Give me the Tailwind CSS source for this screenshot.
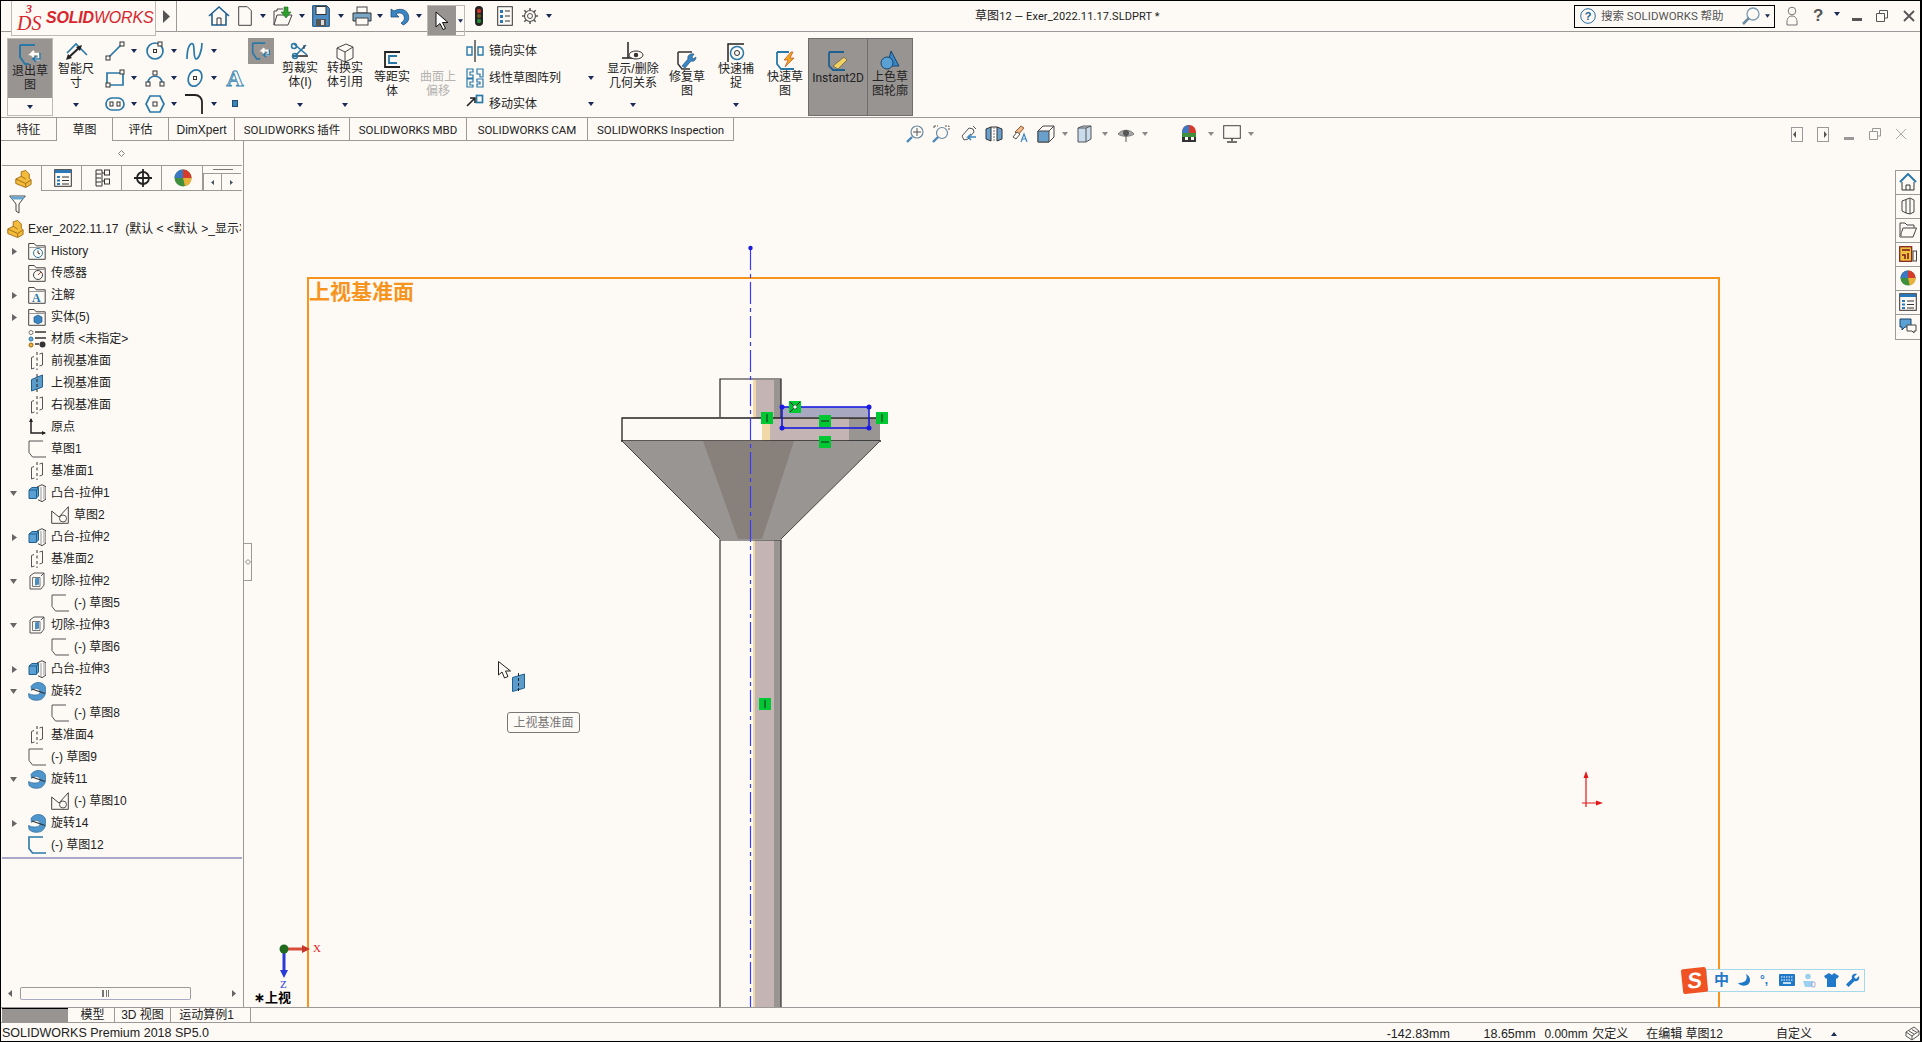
<!DOCTYPE html>
<html lang="zh">
<head>
<meta charset="utf-8">
<title>SOLIDWORKS</title>
<script src="https://cdn.jsdelivr.net/npm/@tailwindcss/browser@4"></script>
</head>
<body class="bg-[#fdfaf6]">
<svg class="hidden">
  <symbol id="drop" viewBox="0 0 6 4"><polygon points="0,0 6,0 3,4" fill="#1b2a55"/></symbol>
  <symbol id="dropg" viewBox="0 0 6 4"><polygon points="0,0 6,0 3,4" fill="#8a8a8a"/></symbol>
  <symbol id="folder" viewBox="0 0 18 18"><path d="M.7 17.3V1.5h5.5l2 2.3h9v13.5z" fill="none" stroke="#444"/><path d="M.7 5.5h16.6" stroke="#999"/></symbol>
  <symbol id="plane" viewBox="0 0 18 18"><path d="M6 4.500 3.500 5.500V17L6.500 16M11.500 2 14.500 1V13L11.500 14" fill="none" stroke="#555"/><path d="M9 0v18" stroke="#333" stroke-dasharray="3 2.500"/></symbol>
  <symbol id="planeb" viewBox="0 0 18 18"><path d="M3.500 5.500 14.500 1V13L3.500 17z" fill="#5b9ccb" stroke="#1f5f8f"/><path d="M9 0v18" stroke="#222" stroke-dasharray="3 2"/></symbol>
  <symbol id="sk" viewBox="0 0 18 18"><path d="M15 1H1v11.5L4.500 17H18" fill="none" stroke="#555"/></symbol>
  <symbol id="skb" viewBox="0 0 18 18"><path d="M15 1H1v11.500L4.500 17H18" fill="none" stroke="#2a78a8" stroke-width="1.600"/></symbol>
  <symbol id="skc" viewBox="0 0 18 18"><path d="M.7 5 8 11 17.300.7v16.600H.700z" fill="none" stroke="#444"/><circle cx="12" cy="12.500" r="3.500" fill="#fdfaf6" stroke="#555"/></symbol>
  <symbol id="ext" viewBox="0 0 18 18"><path d="M9 3 14 .7l4 2V15l-4 2.700-4-2" fill="#fdfaf6" stroke="#444"/><path d="M13 3v14M16 2v13" stroke="#999"/><path d="M1 6l3-2.500h6.500V12L8 14.500H1z" fill="#5aa0d2" stroke="#1f5f8f"/><path d="M1 6h7.500v8.500M8.500 6l2-2.500" fill="none" stroke="#1f5f8f"/></symbol>
  <symbol id="cut" viewBox="0 0 18 18"><path d="M2 4 6 1h10v12l-3 4H2z" fill="#fdfaf6" stroke="#555"/><path d="M4.500 5.500h7.500v9H4.500z" fill="#fdfaf6" stroke="#777"/><path d="M7 6.500l4-1v7l-4 1z" fill="#4a8fc0"/><path d="M13 4 16 1" stroke="#555"/></symbol>
  <symbol id="rev" viewBox="0 0 18 19"><path d="M3 5C6 0 14-.5 17 4.500c2 5 .5 11-4 13.500-4 1.500-9 1-12-2L.5 12c4 2 9 2 11 0 1.500-2 0-4.500-2.500-5-2-.5-4 .5-5.500 2z" fill="#4f96cc" stroke="#2a6a9c" stroke-width=".7"/><path d="M4 7.500l13 4.500" stroke="#333" stroke-width="1.300"/></symbol>
  <symbol id="part" viewBox="0 0 20 20"><path d="M2 10 8 7V2l5-1.500 4 4V9l2 2v5l-6 3.500L2 15z" fill="#f2bb3c" stroke="#a06a10" stroke-linejoin="round"/><path d="M2 10l11 5 6-4M13 15v4M8 7l5 3" fill="none" stroke="#a06a10"/></symbol>
  <symbol id="pane" viewBox="0 0 18 18"><rect x=".700" y=".700" width="16.600" height="16.600" fill="#fdfaf6" stroke="#333"/><rect x="1" y="1" width="16" height="3" fill="#2a78b8"/><path d="M3 7h3v2H3zM3 10.500h3v2H3zM3 14h3v2H3z" fill="#2a78b8"/><path d="M8 8h7M8 11.500h7M8 15h7" stroke="#333"/></symbol>
  <symbol id="appear" viewBox="0 0 18 18"><circle cx="9" cy="9" r="8.500" fill="#3f8f3c"/><path d="M9 .5A8.500 8.500 0 0 1 17.500 9H9z" fill="#d63a2a"/><path d="M.5 9A8.500 8.500 0 0 1 9 .5V9z" fill="#3b77c2"/><path d="M9 9h8.500A8.500 8.500 0 0 1 11 17.300z" fill="#e9b13a"/></symbol>
</svg>

<div class="w-[1922px] h-[1042px] overflow-hidden flex flex-col border-t border-b border-l border-r-2 border-black bg-[#fdfaf6] text-[12px] leading-[14px] text-[#222] [font-family:'Liberation_Sans','Noto_Sans_CJK_SC',sans-serif]">

  <!-- title bar -->
  <div class="h-[31px] shrink-0 flex items-center border-b border-[#9c9a98]">
    <div class="ml-[10px] w-[145px] h-[35px] self-start shrink-0 z-10 flex items-center border-x border-b border-[#bdbab6] bg-[#fdfaf6]">
      <svg class="ml-[4px] w-[28px] h-[30px]" viewBox="0 0 28 30"><text x="10" y="10" font-size="12" font-style="italic" font-weight="700" fill="#d8262c" font-family="Liberation Serif">3</text><text x="1" y="27" font-size="20" font-style="italic" fill="#d8262c" font-family="Liberation Serif">DS</text></svg>
      <span class="ml-[2px] text-[#d8262c] italic text-[16px] leading-[18px] tracking-[-0.2px] whitespace-nowrap"><b>SOLID</b>WORKS</span>
    </div>
    <svg class="ml-[7px] w-[7px] h-[13px]" viewBox="0 0 7 13"><polygon points="0,0 7,6.500 0,13" fill="#555"/></svg>
    <div class="ml-[6px] w-px h-full bg-[#9c9a98]"></div>
    <svg class="ml-[31px] w-[22px] h-[22px]" viewBox="0 0 22 22"><path d="M1 11 11 2l10 9M4 9v11h14V9" fill="#fdfaf6" stroke="#1e5f92" stroke-width="1.600"/><path d="M9 20v-7h4v7" fill="none" stroke="#333"/></svg>
    <svg class="ml-[8px] w-[14px] h-[20px]" viewBox="0 0 14 20"><path d="M.7.7h8.600l4 4v14.600H.7z" fill="#fdfaf6" stroke="#444"/></svg>
    <svg class="ml-[8px] w-[6px] h-[4px]"><use href="#drop"/></svg>
    <svg class="ml-[7px] w-[20px] h-[20px]" viewBox="0 0 20 20"><path d="M1 19V5h3V3h6M1 19l3-10h15l-4 10z" fill="#fdfaf6" stroke="#444"/><path d="M11 1v5H8l5 6 5-6h-3V1z" fill="#2f9e2f" stroke="#1d6d1d" stroke-width=".6"/></svg>
    <svg class="ml-[6px] w-[6px] h-[4px]"><use href="#drop"/></svg>
    <svg class="ml-[7px] w-[18px] h-[22px]" viewBox="0 0 18 22"><path d="M.7.7h14l2.600 2.600v18H.7z" fill="#4d8cc0" stroke="#16456e"/><rect x="4" y="1.500" width="10" height="8" fill="#fdfaf6" stroke="#333"/><rect x="4" y="14" width="10" height="7" fill="#555"/><rect x="9" y="15" width="3" height="5" fill="#ddd"/></svg>
    <svg class="ml-[8px] w-[6px] h-[4px]"><use href="#drop"/></svg>
    <svg class="ml-[8px] w-[20px] h-[20px]" viewBox="0 0 20 20"><rect x="5" y="1" width="10" height="6" fill="#fdfaf6" stroke="#444"/><path d="M1 7h18v8H1z" fill="#7aa7c8" stroke="#333"/><rect x="4" y="12" width="12" height="7" fill="#fdfaf6" stroke="#444"/></svg>
    <svg class="ml-[5px] w-[6px] h-[4px]"><use href="#drop"/></svg>
    <svg class="ml-[7px] w-[20px] h-[20px]" viewBox="0 0 20 20"><path d="M1 3v8h8L6 8c3-2 7-1 8 2 1 3 0 5-3 7l2 2c5-2 7-6 5-11-2-5-9-6-14-3z" fill="#3a86c4" stroke="#16456e" stroke-width=".7"/></svg>
    <svg class="ml-[6px] w-[6px] h-[4px]"><use href="#drop"/></svg>
    <div class="ml-[5px] w-[38px] h-[31px] self-start mt-[4px] flex border border-[#bdbab6]">
      <div class="w-[28px] h-full bg-[#989492] flex items-center justify-center"><svg class="w-[14px] h-[20px]" viewBox="0 0 14 20"><path d="M1 1v15l4-3.500 3 6 2.500-1-3-6H13z" fill="#fff" stroke="#111"/></svg></div>
      <div class="flex-1 flex items-center justify-center"><svg class="w-[5px] h-[4px]"><use href="#drop"/></svg></div>
    </div>
    <svg class="ml-[10px] w-[8px] h-[20px]" viewBox="0 0 8 20"><rect width="8" height="20" rx="4" fill="#222"/><circle cx="4" cy="5" r="2.200" fill="#c8352a"/><circle cx="4" cy="10" r="2" fill="#6a5a20"/><circle cx="4" cy="15" r="2.200" fill="#2a8a3a"/></svg>
    <svg class="ml-[14px] w-[16px] h-[20px]" viewBox="0 0 16 20"><rect x=".7" y=".7" width="14.600" height="18.600" fill="#fdfaf6" stroke="#333"/><path d="M3 4h3v3H3zM3 9h3v3H3zM3 14h3v3H3z" fill="#2a78b8"/><path d="M8 5h5M8 10h5M8 15h5" stroke="#333"/></svg>
    <svg class="ml-[9px] w-[16px] h-[16px]" viewBox="0 0 16 16"><circle cx="8" cy="8" r="5.500" fill="none" stroke="#555" stroke-width="1.200"/><circle cx="8" cy="8" r="2.500" fill="none" stroke="#555"/><path d="M8 0v3M8 13v3M0 8h3M13 8h3M2.300 2.300l2 2M11.700 11.700l2 2M2.300 13.700l2-2M11.700 4.300l2-2" stroke="#555" stroke-width="1.500"/></svg>
    <svg class="ml-[8px] w-[6px] h-[4px]"><use href="#drop"/></svg>
    <div class="ml-[423px] mt-[1px] w-[182px] whitespace-nowrap [font-family:'Roboto','Noto_Sans_CJK_SC',sans-serif] text-[11px] tracking-[0.1px]"><span class="text-[12px]">草图</span>12 — Exer_2022.11.17.SLDPRT *</div>
    <div class="ml-auto flex items-center pr-[5px]">
      <div class="w-[201px] h-[23px] border border-black flex items-center">
        <svg class="ml-[5px] w-[16px] h-[16px]" viewBox="0 0 16 16"><circle cx="8" cy="8" r="7.300" fill="#fdfaf6" stroke="#2a6a9c"/><text x="8" y="12" font-size="11" font-weight="700" text-anchor="middle" fill="#1f5f8f" font-family="Liberation Sans">?</text></svg>
        <span class="ml-[5px] text-[#555] whitespace-nowrap [font-family:'Roboto','Noto_Sans_CJK_SC',sans-serif] text-[11.5px]">搜索 SOLIDWORKS 帮助</span>
        <svg class="ml-auto w-[18px] h-[18px]" viewBox="0 0 18 18"><circle cx="11" cy="7" r="6" fill="#fdfaf6" stroke="#7a9ab0" stroke-width="1.300"/><path d="M7 11 1 17" stroke="#6a8aa0" stroke-width="2.500"/></svg>
        <svg class="ml-[5px] mr-[4px] w-[5px] h-[4px]"><use href="#drop"/></svg>
      </div>
      <svg class="ml-[11px] w-[12px] h-[20px]" viewBox="0 0 12 20"><circle cx="6" cy="5" r="3.800" fill="none" stroke="#777"/><path d="M1 19v-3c0-4 2-6 5-6s5 2 5 6v3z" fill="none" stroke="#777"/></svg>
      <span class="ml-[15px] w-[10px] text-[17px] font-bold text-[#555] leading-[20px]">?</span>
      <svg class="ml-[11px] w-[6px] h-[4px] mb-[4px]"><use href="#drop"/></svg>
      <div class="ml-[12px] w-[10px] h-[3px] mt-[7px] bg-[#555]"></div>
      <svg class="ml-[14px] w-[12px] h-[12px]" viewBox="0 0 12 12"><path d="M3.500 3V.5h8V8H9M.5 3.500h8v8h-8z" fill="none" stroke="#555"/></svg>
      <svg class="ml-[15px] w-[12px] h-[12px]" viewBox="0 0 12 12"><path d="M1 1l10 10M11 1 1 11" stroke="#555" stroke-width="1.800"/></svg>
    </div>
  </div>

  <!-- ribbon -->
  <div class="h-[86px] shrink-0 flex border-b border-[#9c9a98] pt-[6px]">
    <div class="ml-[6px] w-[46px] h-[78px] flex flex-col border border-[#bdbab6]">
      <div class="h-[59px] bg-[#989492] flex flex-col items-center">
        <svg class="mt-[5px] w-[24px] h-[21px]" viewBox="0 0 24 21"><path d="M2 1h15M2 1v12l5 7h4" fill="none" stroke="#2a78a8" stroke-width="2"/><path d="M21 10H13l3-3M13 10l3 3M21 10v5h-6" fill="none" stroke="#fdfaf6" stroke-width="2.400"/><path d="M22 9v6h-7l3-3M15 15l3 3" fill="none" stroke="#2a78a8" stroke-width="1.500"/></svg>
        <div class="mt-[-1px] text-center">退出草<br>图</div>
      </div>
      <div class="flex-1 flex items-center justify-center"><svg class="w-[6px] h-[4px]"><use href="#drop"/></svg></div>
    </div>
    <div class="w-[46px] h-[78px] flex flex-col items-center">
      <svg class="mt-[3px] w-[28px] h-[21px]" viewBox="0 0 28 21"><path d="M5 12 14 3l11 11" fill="none" stroke="#2a78a8" stroke-width="1.600"/><path d="M6 17 18 6" stroke="#222" stroke-width="2"/><path d="M4 19l2-6 4 4zM20 4l-2 6-4-4z" fill="#222"/></svg>
      <div class="text-center">智能尺<br>寸</div>
      <svg class="mt-auto mb-[9px] w-[6px] h-[4px]"><use href="#drop"/></svg>
    </div>
    <div class="ml-[6px] w-[140px] grid grid-cols-[40px_40px_40px_20px] grid-rows-[26px_27px_25px] h-[78px]">
      <div class="flex items-center"><svg class="w-[20px] h-[20px]" viewBox="0 0 20 20"><path d="M3 17 17 3" stroke="#2a78a8" stroke-width="1.700"/><rect x="1" y="15" width="4" height="4" fill="#fdfaf6" stroke="#333"/><rect x="15" y="1" width="4" height="4" fill="#fdfaf6" stroke="#333"/></svg><svg class="ml-[6px] w-[6px] h-[4px]"><use href="#drop"/></svg></div>
      <div class="flex items-center"><svg class="w-[20px] h-[20px]" viewBox="0 0 20 20"><circle cx="10" cy="10" r="8" fill="none" stroke="#2a78a8" stroke-width="1.700"/><rect x="8.500" y="8.500" width="3" height="3" fill="#fdfaf6" stroke="#333"/><rect x="13" y="1" width="4" height="4" fill="#fdfaf6" stroke="#333"/></svg><svg class="ml-[6px] w-[6px] h-[4px]"><use href="#drop"/></svg></div>
      <div class="flex items-center"><svg class="w-[20px] h-[20px]" viewBox="0 0 20 20"><path d="M2 18C2 5 6 1 8 3c2 3 0 14 3 15 3 0 6-9 6-16" fill="none" stroke="#2a78a8" stroke-width="1.700"/></svg><svg class="ml-[6px] w-[6px] h-[4px]"><use href="#drop"/></svg></div>
      <div></div>
      <div class="flex items-center"><svg class="w-[20px] h-[20px]" viewBox="0 0 20 20"><path d="M2 5h16v12H2z" fill="none" stroke="#2a78a8" stroke-width="1.700"/><rect x="15" y="2" width="4" height="4" fill="#fdfaf6" stroke="#333"/><rect x="1" y="15" width="4" height="4" fill="#fdfaf6" stroke="#333"/></svg><svg class="ml-[6px] w-[6px] h-[4px]"><use href="#drop"/></svg></div>
      <div class="flex items-center"><svg class="w-[20px] h-[20px]" viewBox="0 0 20 20"><path d="M3 15C3 6 17 6 17 15" fill="none" stroke="#2a78a8" stroke-width="1.700"/><rect x="1" y="14" width="4" height="4" fill="#fdfaf6" stroke="#333"/><rect x="15" y="14" width="4" height="4" fill="#fdfaf6" stroke="#333"/><rect x="8" y="3" width="4" height="4" fill="#fdfaf6" stroke="#333"/></svg><svg class="ml-[6px] w-[6px] h-[4px]"><use href="#drop"/></svg></div>
      <div class="flex items-center"><svg class="w-[20px] h-[20px]" viewBox="0 0 20 20"><ellipse cx="10" cy="10" rx="6.500" ry="8.500" transform="rotate(25 10 10)" fill="none" stroke="#2a78a8" stroke-width="1.700"/><rect x="8.500" y="8.500" width="3" height="3" fill="#fdfaf6" stroke="#333"/></svg><svg class="ml-[6px] w-[6px] h-[4px]"><use href="#drop"/></svg></div>
      <div class="flex items-center justify-center"><span class="text-[24px] leading-[24px] font-bold text-[#fdfaf6] [-webkit-text-stroke:1px_#3a86b4] [font-family:'Liberation_Serif',serif]">A</span></div>
      <div class="flex items-center"><svg class="w-[20px] h-[16px]" viewBox="0 0 20 16"><rect x="1" y="2" width="18" height="12" rx="6" fill="#fdfaf6" stroke="#2a78a8" stroke-width="1.700"/><rect x="5" y="6" width="3" height="4" fill="#fdfaf6" stroke="#333"/><rect x="12" y="6" width="3" height="4" fill="#fdfaf6" stroke="#333"/></svg><svg class="ml-[6px] w-[6px] h-[4px]"><use href="#drop"/></svg></div>
      <div class="flex items-center"><svg class="w-[20px] h-[20px]" viewBox="0 0 20 20"><polygon points="5,2 15,2 19,10 15,18 5,18 1,10" fill="none" stroke="#2a78a8" stroke-width="1.700"/><rect x="8" y="8" width="4" height="4" fill="#fdfaf6" stroke="#333"/></svg><svg class="ml-[6px] w-[6px] h-[4px]"><use href="#drop"/></svg></div>
      <div class="flex items-center"><svg class="w-[20px] h-[22px]" viewBox="0 0 20 22"><path d="M0 2h10c4 0 7 3 7 7v12" fill="none" stroke="#222" stroke-width="1.800"/></svg><svg class="ml-[6px] w-[6px] h-[4px]"><use href="#drop"/></svg></div>
      <div class="flex items-center justify-center"><div class="w-[6px] h-[7px] bg-[#3a86b4] border border-[#1f4f78]"></div></div>
    </div>
    <div class="ml-[3px] w-[26px] h-[26px] bg-[#989492] flex items-center justify-center"><svg class="w-[20px] h-[20px]" viewBox="0 0 24 21"><path d="M2 1h15M2 1v12l5 7h4" fill="none" stroke="#2a78a8" stroke-width="2"/><path d="M21 10H13l3-3M13 10l3 3M21 10v5h-6" fill="none" stroke="#fdfaf6" stroke-width="2.400"/><path d="M22 9v6h-7l3-3M15 15l3 3" fill="none" stroke="#2a78a8" stroke-width="1.500"/></svg></div>
    <div class="ml-[3px] w-[46px] h-[78px] flex flex-col items-center">
      <svg class="mt-[4px] w-[20px] h-[20px]" viewBox="0 0 20 20"><path d="M2 14h16" stroke="#222" stroke-width="1.500"/><path d="M4 2 17 13M16 3 4 15" stroke="#2a78a8" stroke-width="1.600"/><circle cx="4" cy="4" r="2.500" fill="none" stroke="#2a78a8" stroke-width="1.500"/><circle cx="5" cy="14" r="2.500" fill="none" stroke="#2a78a8" stroke-width="1.500"/><path d="M14 3v4" stroke="#222"/></svg>
      <div class="text-center mt-[-1px]">剪裁实<br>体(I)</div>
      <svg class="mt-auto mb-[9px] w-[6px] h-[4px]"><use href="#drop"/></svg>
    </div>
    <div class="w-[44px] h-[78px] flex flex-col items-center">
      <svg class="mt-[5px] w-[18px] h-[20px]" viewBox="0 0 18 20"><path d="M1 5 10 1l7 3v11l-8 4-8-4z" fill="#fdfaf6" stroke="#444"/><path d="M1 5l8 4 8-5M9 9v10" fill="none" stroke="#444"/></svg>
      <div class="text-center mt-[-2px]">转换实<br>体引用</div>
      <svg class="mt-auto mb-[9px] w-[6px] h-[4px]"><use href="#drop"/></svg>
    </div>
    <div class="w-[50px] h-[78px] flex flex-col items-center">
      <svg class="mt-[13px] w-[18px] h-[19px]" viewBox="0 0 18 19"><path d="M17 1H2v15h15" fill="none" stroke="#222" stroke-width="1.800"/><path d="M14 5H6v7h8" fill="none" stroke="#2a78a8" stroke-width="1.800"/></svg>
      <div class="text-center">等距实<br>体</div>
    </div>
    <div class="w-[42px] h-[78px] flex flex-col items-center pt-[32px] text-[#b4b2b0]">
      <div class="text-center">曲面上<br>偏移</div>
    </div>
    <div class="ml-[7px] w-[134px] h-[78px] grid grid-rows-[26px_27px_25px]">
      <div class="flex items-center"><svg class="w-[18px] h-[22px]" viewBox="0 0 18 22"><path d="M9 0v22" stroke="#222" stroke-width="1.200"/><path d="M1 7h5v8H1zM17 7h-5v8h5z" fill="none" stroke="#2a78a8" stroke-width="1.400"/></svg><span class="ml-[5px]">镜向实体</span></div>
      <div class="flex items-center"><svg class="w-[18px] h-[20px]" viewBox="0 0 18 20"><path d="M1 1h6v3H4v3h3v3H1zM11 1h6v8h-3V6h-3zM1 11h6v3H4v3h3v2H1zM11 11h6v8h-6v-3h3v-2h-3z" fill="none" stroke="#2a78a8" stroke-width="1.200"/></svg><span class="ml-[5px]">线性草图阵列</span><svg class="ml-auto mr-[6px] w-[6px] h-[4px]"><use href="#drop"/></svg></div>
      <div class="flex items-center"><svg class="w-[18px] h-[14px] mb-[6px]" viewBox="0 0 18 14"><path d="M1 12 8 5M4 4h5v5" fill="none" stroke="#222" stroke-width="1.600"/><rect x="10.500" y="1.500" width="6" height="7" fill="none" stroke="#2a78a8" stroke-width="1.700"/></svg><span class="ml-[5px]">移动实体</span><svg class="ml-auto mr-[6px] w-[6px] h-[4px]"><use href="#drop"/></svg></div>
    </div>
    <div class="w-[66px] h-[78px] flex flex-col items-center">
      <svg class="mt-[3px] w-[22px] h-[21px]" viewBox="0 0 22 21"><path d="M6 1v16M0 17h12" stroke="#222" stroke-width="1.500"/><ellipse cx="14" cy="14" rx="7" ry="4" fill="#fdfaf6" stroke="#333"/><circle cx="14" cy="14" r="2.200" fill="#333"/></svg>
      <div class="text-center whitespace-nowrap">显示/删除<br>几何关系</div>
      <svg class="mt-auto mb-[9px] w-[6px] h-[4px]"><use href="#drop"/></svg>
    </div>
    <div class="w-[42px] h-[78px] flex flex-col items-center">
      <svg class="mt-[13px] w-[20px] h-[19px]" viewBox="0 0 20 19"><path d="M1 1h14M1 1v12l4 5h8" fill="none" stroke="#333" stroke-width="1.500"/><path d="M17 3l-2 3 1 2 3-2c0 3-2 5-5 4l-6 7-3-2 6-7c-1-3 2-6 6-5z" fill="#3a86c4" stroke="#16456e" stroke-width=".6"/></svg>
      <div class="text-center">修复草<br>图</div>
    </div>
    <div class="w-[56px] h-[78px] flex flex-col items-center">
      <svg class="mt-[5px] w-[18px] h-[19px]" viewBox="0 0 18 19"><path d="M1 19V1h16" fill="none" stroke="#222" stroke-width="1.500"/><circle cx="10" cy="10" r="6.500" fill="none" stroke="#2a78a8" stroke-width="1.500"/><circle cx="10" cy="10" r="2.500" fill="none" stroke="#333"/></svg>
      <div class="text-center">快速捕<br>捉</div>
      <svg class="mt-auto mb-[9px] w-[6px] h-[4px]"><use href="#drop"/></svg>
    </div>
    <div class="w-[42px] h-[78px] flex flex-col items-center">
      <svg class="mt-[13px] w-[19px] h-[19px]" viewBox="0 0 19 19"><path d="M1 1h12M1 1v12l4 5h13" fill="none" stroke="#2a78a8" stroke-width="1.800"/><path d="M15 1 8 9h4l-3 7 9-9h-4l3-6z" fill="#f0a820" stroke="#b83a1a" stroke-width=".6"/></svg>
      <div class="text-center">快速草<br>图</div>
    </div>
    <div class="ml-[2px] w-[60px] h-[78px] flex flex-col items-center bg-[#989492] border border-[#6f6e6c]">
      <svg class="mt-[12px] w-[20px] h-[20px]" viewBox="0 0 20 20"><path d="M1 1h15M1 1v14l4 4h12" fill="none" stroke="#1f5f8f" stroke-width="1.800"/><path d="M5 15 16 6l3 3-9 9z" fill="#f0d060" stroke="#444" stroke-width=".6"/></svg>
      <div class="text-center text-[#222] [font-family:'Roboto',sans-serif]">Instant2D</div>
    </div>
    <div class="w-[45px] h-[78px] flex flex-col items-center bg-[#989492] border border-l-0 border-[#6f6e6c]">
      <svg class="mt-[12px] w-[20px] h-[19px]" viewBox="0 0 20 19"><path d="M11 0 19 15H7z" fill="#3a86c4" stroke="#16456e"/><circle cx="7" cy="12" r="6" fill="#5aa0d2" stroke="#16456e"/></svg>
      <div class="text-center">上色草<br>图轮廓</div>
    </div>
  </div>

  <!-- tabs + view toolbar -->
  <div class="h-[23px] shrink-0 flex z-10">
    <div class="w-[56px] h-full flex items-center justify-center border-r border-b border-[#9c9a98] pt-[1px]">特征</div>
    <div class="w-[56px] h-full flex items-center justify-center border-r border-[#9c9a98] pt-[1px]">草图</div>
    <div class="w-[56px] h-full flex items-center justify-center border-r border-b border-[#9c9a98] pt-[1px]">评估</div>
    <div class="w-[66px] h-full flex items-center justify-center border-r border-b border-[#9c9a98] pt-[1px]">DimXpert</div>
    <div class="w-[115px] h-full flex items-center justify-center border-r border-b border-[#9c9a98] whitespace-nowrap pt-[1px] text-[11.5px] [font-family:'Roboto','Noto_Sans_CJK_SC',sans-serif]">SOLIDWORKS 插件</div>
    <div class="w-[117px] h-full flex items-center justify-center border-r border-b border-[#9c9a98] whitespace-nowrap pt-[1px] text-[11.5px] [font-family:'Roboto','Noto_Sans_CJK_SC',sans-serif]">SOLIDWORKS MBD</div>
    <div class="w-[121px] h-full flex items-center justify-center border-r border-b border-[#9c9a98] whitespace-nowrap pt-[1px] text-[11.5px] [font-family:'Roboto','Noto_Sans_CJK_SC',sans-serif]">SOLIDWORKS CAM</div>
    <div class="w-[146px] h-full flex items-center justify-center border-r border-b border-[#9c9a98] whitespace-nowrap pt-[1px] text-[11.5px] [font-family:'Roboto','Noto_Sans_CJK_SC',sans-serif]">SOLIDWORKS Inspection</div>
    <div class="flex-1 flex items-center h-[18px] mt-[7px]">
      <svg class="ml-[172px] w-[18px] h-[18px]" viewBox="0 0 18 18"><circle cx="11" cy="7" r="6" fill="#fdfaf6" stroke="#6a8aa0" stroke-width="1.200"/><path d="M11 3v8M7 7h8" stroke="#555"/><path d="M6 12l-5 5" stroke="#4a88b8" stroke-width="2.400"/></svg>
      <svg class="ml-[8px] w-[18px] h-[18px]" viewBox="0 0 18 18"><circle cx="10" cy="8" r="5.500" fill="#fdfaf6" stroke="#6a8aa0" stroke-width="1.200"/><path d="M6 12l-5 5" stroke="#4a88b8" stroke-width="2.400"/><path d="M2 1h4M13 1h4v4M2 1v3" fill="none" stroke="#555" stroke-dasharray="2 1"/></svg>
      <svg class="ml-[9px] w-[18px] h-[18px]" viewBox="0 0 18 18"><path d="M3 11 10 3l4 1 1 3-6 7-4 1z" fill="#fdfaf6" stroke="#555"/><path d="M14 1l3 3" stroke="#555"/><path d="M17 12H9l3-3M9 12l3 3" fill="none" stroke="#3a86c4" stroke-width="1.500"/></svg>
      <svg class="ml-[8px] w-[18px] h-[18px]" viewBox="0 0 18 18"><path d="M1 4l5-2v14l-5-2zM17 4l-5-2v14l5-2z" fill="#6aa0cc" stroke="#333"/><path d="M6 2h6" stroke="#333"/><path d="M9 2v14" stroke="#777" stroke-dasharray="2 1"/></svg>
      <svg class="ml-[8px] w-[18px] h-[18px]" viewBox="0 0 18 18"><path d="M4 7 10 1l3 2-6 7z" fill="#e9b98a" stroke="#a05a30"/><path d="M2 12l4-5 3 2-4 5z" fill="#fdfaf6" stroke="#555"/><path d="M10 17l3-8 3 8M11 14h4" fill="none" stroke="#3a86c4" stroke-width="1.200"/></svg>
      <svg class="ml-[8px] w-[18px] h-[18px]" viewBox="0 0 18 18"><path d="M1 6l5-5h11v11l-5 5H1z" fill="#fdfaf6" stroke="#444"/><path d="M1 6h11v11H1z" fill="#6aa0cc" stroke="#444"/><path d="M12 6l5-5" stroke="#444"/></svg>
      <svg class="ml-[7px] w-[6px] h-[4px]"><use href="#dropg"/></svg>
      <svg class="ml-[8px] w-[18px] h-[18px]" viewBox="0 0 18 18"><path d="M2 3l5-2h8v13l-5 3H2z" fill="#c9dcec" stroke="#555"/><path d="M2 3h8v14M10 3l5-2" fill="none" stroke="#555"/></svg>
      <svg class="ml-[8px] w-[6px] h-[4px]"><use href="#dropg"/></svg>
      <svg class="ml-[9px] w-[18px] h-[18px]" viewBox="0 0 18 18"><path d="M1 9c4-5 12-5 16 0-4 3-12 3-16 0z" fill="#aaa" stroke="#777"/><circle cx="9" cy="8" r="3" fill="#555"/><path d="M9 9v8" stroke="#555"/></svg>
      <svg class="ml-[7px] w-[6px] h-[4px]"><use href="#dropg"/></svg>
      <svg class="ml-[32px] w-[18px] h-[20px]" viewBox="0 0 18 20"><path d="M9 1C4 1 2 5 2 9v4h14V9c0-4-2-8-7-8z" fill="#d63a2a"/><path d="M2 9c0-4 2-8 7-8v8z" fill="#3b77c2"/><path d="M9 9h7v4H2V9z" fill="#3f8f3c"/><path d="M2 13h3v3h3v-3h3v3h3v-3h2v5H2z" fill="#333"/></svg>
      <svg class="ml-[10px] w-[6px] h-[4px]"><use href="#dropg"/></svg>
      <svg class="ml-[9px] w-[18px] h-[18px]" viewBox="0 0 18 18"><rect x=".7" y=".7" width="16.600" height="12.600" fill="#fdfaf6" stroke="#444"/><path d="M9 13v3M4 17h10" stroke="#444" stroke-width="1.500"/></svg>
      <svg class="ml-[7px] w-[6px] h-[4px]"><use href="#dropg"/></svg>
      <div class="ml-auto flex items-center pr-[13px]">
        <svg class="w-[12px] h-[15px]" viewBox="0 0 12 15"><rect x=".5" y=".5" width="11" height="14" fill="none" stroke="#999"/><path d="M5 4v7L2 7.500z" fill="#555"/></svg>
        <svg class="ml-[14px] w-[12px] h-[15px]" viewBox="0 0 12 15"><rect x=".5" y=".5" width="11" height="14" fill="none" stroke="#999"/><path d="M7 4v7l3-3.500z" fill="#555"/></svg>
        <div class="ml-[15px] w-[10px] h-[3px] mt-[9px] bg-[#999]"></div>
        <svg class="ml-[15px] w-[12px] h-[12px]" viewBox="0 0 12 12"><path d="M3.500 3V.5h8V8H9M.5 3.500h8v8h-8z" fill="none" stroke="#999"/></svg>
        <svg class="ml-[14px] w-[12px] h-[12px]" viewBox="0 0 12 12"><path d="M1 1l10 10M11 1 1 11" stroke="#aaa"/></svg>
      </div>
    </div>
  </div>

  <!-- main -->
  <div class="flex-1 min-h-0 flex overflow-hidden">
    <!-- sidebar -->
    <div class="w-[243px] shrink-0 flex flex-col border-r border-[#9c9a98]">
      <div class="h-[24px] flex items-center justify-center shrink-0"><svg class="mt-[0px] ml-[-2px] w-[7px] h-[7px]" viewBox="0 0 7 7"><path d="M3.500.5 6.500 3.500 3.500 6.500.5 3.500z" fill="none" stroke="#888"/></svg></div>
      <div class="h-[26px] shrink-0 flex border-t border-[#9c9a98] mx-[1px] relative">
        <div class="w-[40px] flex items-center justify-center border-r border-[#9c9a98] pl-[2px]"><svg class="w-[18px] h-[18px]"><use href="#part"/></svg></div>
        <div class="w-[40px] flex items-center justify-center border-r border-b border-[#9c9a98] pl-[2px]"><svg class="w-[18px] h-[18px]"><use href="#pane"/></svg></div>
        <div class="w-[40px] flex items-center justify-center border-r border-b border-[#9c9a98] pl-[2px]"><svg class="w-[15px] h-[18px]" viewBox="0 0 15 18"><path d="M1 1h6v16H1zM1 5h5M1 9h5M1 13h5M7 4h3M7 12h3" fill="none" stroke="#333"/><rect x="9.500" y="1" width="5" height="5" fill="#fdfaf6" stroke="#333"/><rect x="9.500" y="10" width="5" height="5" fill="#fdfaf6" stroke="#333"/></svg></div>
        <div class="w-[40px] flex items-center justify-center border-r border-b border-[#9c9a98] pl-[2px]"><svg class="w-[18px] h-[18px]" viewBox="0 0 18 18"><circle cx="9" cy="9" r="6" fill="none" stroke="#222" stroke-width="1.800"/><path d="M9 0v18M0 9h18" stroke="#222" stroke-width="1.800"/></svg></div>
        <div class="w-[41px] flex items-center justify-center border-r border-b border-[#9c9a98] pl-[2px]"><svg class="w-[18px] h-[18px]"><use href="#appear"/></svg></div>
        <div class="flex-1 flex flex-col border-b border-[#9c9a98]">
          <div class="h-[7px] flex justify-center items-start"><div class="w-[20px] h-px mt-[3px] bg-[#777]"></div></div>
          <div class="flex-1 flex">
            <div class="w-[19px] border-t border-x border-[#9c9a98] flex items-center justify-center"><svg class="w-[3px] h-[5px]" viewBox="0 0 3 5"><path d="M3 0v5L0 2.500z" fill="#456"/></svg></div>
            <div class="w-[19px] border-t border-[#9c9a98] flex items-center justify-center"><svg class="w-[3px] h-[5px]" viewBox="0 0 3 5"><path d="M0 0v5l3-2.500z" fill="#456"/></svg></div>
          </div>
        </div>
      </div>
      <div class="h-[26px] shrink-0 flex items-center pl-[8px]"><svg class="w-[17px] h-[19px]" viewBox="0 0 17 19"><path d="M.7 1h15.600L10 9v9L7 16V9z" fill="#fdfaf6" stroke="#444"/><path d="M1.500 1.500h14l-1.500 3H3z" fill="#6aa8d4"/></svg></div>
      <div class="h-[23px] shrink-0 flex items-center overflow-hidden whitespace-nowrap pl-[5px]">
        <svg class="w-[18px] h-[18px] shrink-0"><use href="#part"/></svg>
        <span class="ml-[4px] w-[213px] overflow-hidden">Exer_2022.11.17&nbsp;&nbsp;(默认 &lt; &lt;默认 &gt;_显示状</span>
      </div>
      <!-- tree -->
      <div class="flex flex-col shrink-0">
        <div class="h-[22px] flex items-center"><div class="w-[27px] flex justify-center"><svg class="ml-[-1px] w-[5px] h-[7px]" viewBox="0 0 5 7"><path d="M0 0v7l5-3.500z" fill="#666"/></svg></div><svg class="w-[18px] h-[18px]"><use href="#folder"/><circle cx="10" cy="11" r="4.500" fill="#fdfaf6" stroke="#2a78a8"/><path d="M10 8.500V11l2 1" stroke="#333" fill="none"/></svg><span class="ml-[5px]">History</span></div>
        <div class="h-[22px] flex items-center"><div class="w-[27px]"></div><svg class="w-[18px] h-[18px]"><use href="#folder"/><circle cx="10" cy="11" r="4.500" fill="#fdfaf6" stroke="#444"/><path d="M10 11l3-3" stroke="#c8352a"/></svg><span class="ml-[5px]">传感器</span></div>
        <div class="h-[22px] flex items-center"><div class="w-[27px] flex justify-center"><svg class="ml-[-1px] w-[5px] h-[7px]" viewBox="0 0 5 7"><path d="M0 0v7l5-3.500z" fill="#666"/></svg></div><svg class="w-[18px] h-[18px]"><use href="#folder"/><text x="4" y="16" font-size="12" font-weight="700" fill="#2a78a8" font-family="Liberation Serif">A</text></svg><span class="ml-[5px]">注解</span></div>
        <div class="h-[22px] flex items-center"><div class="w-[27px] flex justify-center"><svg class="ml-[-1px] w-[5px] h-[7px]" viewBox="0 0 5 7"><path d="M0 0v7l5-3.500z" fill="#666"/></svg></div><svg class="w-[18px] h-[18px]"><use href="#folder"/><path d="M6 9l4-2 4 2v5l-4 2-4-2z" fill="#3a86c4" stroke="#16456e" stroke-width=".6"/></svg><span class="ml-[5px]">实体(5)</span></div>
        <div class="h-[22px] flex items-center"><div class="w-[27px]"></div><svg class="w-[18px] h-[18px]" viewBox="0 0 18 18"><circle cx="3" cy="2.500" r="2" fill="#fdfaf6" stroke="#777"/><circle cx="3" cy="9" r="2" fill="#6aa8d4" stroke="#2a78a8"/><circle cx="3" cy="15" r="2" fill="#e9b13a" stroke="#a06a10"/><path d="M7 2h11M7 8h11M7 14h4" stroke="#333" stroke-width="1.500"/><circle cx="14.500" cy="14.500" r="3" fill="#333"/></svg><span class="ml-[5px]">材质 &lt;未指定&gt;</span></div>
        <div class="h-[22px] flex items-center"><div class="w-[27px]"></div><svg class="w-[18px] h-[18px]"><use href="#plane"/></svg><span class="ml-[5px]">前视基准面</span></div>
        <div class="h-[22px] flex items-center"><div class="w-[27px]"></div><svg class="w-[18px] h-[18px]"><use href="#planeb"/></svg><span class="ml-[5px]">上视基准面</span></div>
        <div class="h-[22px] flex items-center"><div class="w-[27px]"></div><svg class="w-[18px] h-[18px]"><use href="#plane"/></svg><span class="ml-[5px]">右视基准面</span></div>
        <div class="h-[22px] flex items-center"><div class="w-[27px]"></div><svg class="w-[18px] h-[18px]" viewBox="0 0 18 18"><path d="M3 1v14h14" fill="none" stroke="#222" stroke-width="1.500"/><path d="M3 0 1 4h4zM18 15l-4-2v4z" fill="#222"/></svg><span class="ml-[5px]">原点</span></div>
        <div class="h-[22px] flex items-center"><div class="w-[27px]"></div><svg class="w-[18px] h-[18px]"><use href="#sk"/></svg><span class="ml-[5px]">草图1</span></div>
        <div class="h-[22px] flex items-center"><div class="w-[27px]"></div><svg class="w-[18px] h-[18px]"><use href="#plane"/></svg><span class="ml-[5px]">基准面1</span></div>
        <div class="h-[22px] flex items-center"><div class="w-[27px] flex justify-center"><svg class="ml-[-2px] w-[7px] h-[5px]" viewBox="0 0 7 5"><path d="M0 0h7L3.500 5z" fill="#666"/></svg></div><svg class="w-[18px] h-[18px]"><use href="#ext"/></svg><span class="ml-[5px]">凸台-拉伸1</span></div>
        <div class="h-[22px] flex items-center pl-[50px]"><svg class="w-[18px] h-[18px]"><use href="#skc"/></svg><span class="ml-[5px]">草图2</span></div>
        <div class="h-[22px] flex items-center"><div class="w-[27px] flex justify-center"><svg class="ml-[-1px] w-[5px] h-[7px]" viewBox="0 0 5 7"><path d="M0 0v7l5-3.500z" fill="#666"/></svg></div><svg class="w-[18px] h-[18px]"><use href="#ext"/></svg><span class="ml-[5px]">凸台-拉伸2</span></div>
        <div class="h-[22px] flex items-center"><div class="w-[27px]"></div><svg class="w-[18px] h-[18px]"><use href="#plane"/></svg><span class="ml-[5px]">基准面2</span></div>
        <div class="h-[22px] flex items-center"><div class="w-[27px] flex justify-center"><svg class="ml-[-2px] w-[7px] h-[5px]" viewBox="0 0 7 5"><path d="M0 0h7L3.500 5z" fill="#666"/></svg></div><svg class="w-[18px] h-[18px]"><use href="#cut"/></svg><span class="ml-[5px]">切除-拉伸2</span></div>
        <div class="h-[22px] flex items-center pl-[50px]"><svg class="w-[18px] h-[18px]"><use href="#sk"/></svg><span class="ml-[5px]">(-) 草图5</span></div>
        <div class="h-[22px] flex items-center"><div class="w-[27px] flex justify-center"><svg class="ml-[-2px] w-[7px] h-[5px]" viewBox="0 0 7 5"><path d="M0 0h7L3.500 5z" fill="#666"/></svg></div><svg class="w-[18px] h-[18px]"><use href="#cut"/></svg><span class="ml-[5px]">切除-拉伸3</span></div>
        <div class="h-[22px] flex items-center pl-[50px]"><svg class="w-[18px] h-[18px]"><use href="#sk"/></svg><span class="ml-[5px]">(-) 草图6</span></div>
        <div class="h-[22px] flex items-center"><div class="w-[27px] flex justify-center"><svg class="ml-[-1px] w-[5px] h-[7px]" viewBox="0 0 5 7"><path d="M0 0v7l5-3.500z" fill="#666"/></svg></div><svg class="w-[18px] h-[18px]"><use href="#ext"/></svg><span class="ml-[5px]">凸台-拉伸3</span></div>
        <div class="h-[22px] flex items-center"><div class="w-[27px] flex justify-center"><svg class="ml-[-2px] w-[7px] h-[5px]" viewBox="0 0 7 5"><path d="M0 0h7L3.500 5z" fill="#666"/></svg></div><svg class="w-[18px] h-[20px]"><use href="#rev"/></svg><span class="ml-[5px]">旋转2</span></div>
        <div class="h-[22px] flex items-center pl-[50px]"><svg class="w-[18px] h-[18px]"><use href="#sk"/></svg><span class="ml-[5px]">(-) 草图8</span></div>
        <div class="h-[22px] flex items-center"><div class="w-[27px]"></div><svg class="w-[18px] h-[18px]"><use href="#plane"/></svg><span class="ml-[5px]">基准面4</span></div>
        <div class="h-[22px] flex items-center"><div class="w-[27px]"></div><svg class="w-[18px] h-[18px]"><use href="#sk"/></svg><span class="ml-[5px]">(-) 草图9</span></div>
        <div class="h-[22px] flex items-center"><div class="w-[27px] flex justify-center"><svg class="ml-[-2px] w-[7px] h-[5px]" viewBox="0 0 7 5"><path d="M0 0h7L3.500 5z" fill="#666"/></svg></div><svg class="w-[18px] h-[20px]"><use href="#rev"/></svg><span class="ml-[5px]">旋转11</span></div>
        <div class="h-[22px] flex items-center pl-[50px]"><svg class="w-[18px] h-[18px]"><use href="#skc"/></svg><span class="ml-[5px]">(-) 草图10</span></div>
        <div class="h-[22px] flex items-center"><div class="w-[27px] flex justify-center"><svg class="ml-[-1px] w-[5px] h-[7px]" viewBox="0 0 5 7"><path d="M0 0v7l5-3.500z" fill="#666"/></svg></div><svg class="w-[18px] h-[20px]"><use href="#rev"/></svg><span class="ml-[5px]">旋转14</span></div>
        <div class="h-[22px] flex items-center"><div class="w-[27px]"></div><svg class="w-[18px] h-[18px]"><use href="#skb"/></svg><span class="ml-[5px]">(-) 草图12</span></div>
      </div>
      <div class="mt-[1px] mx-[1px] h-[2px] bg-[#a9a9c9] shrink-0"></div>
      <div class="mt-auto mb-[7px] h-[13px] shrink-0 flex items-center">
        <svg class="ml-[7px] w-[4px] h-[7px]" viewBox="0 0 4 7"><path d="M4 0v7L0 3.500z" fill="#666"/></svg>
        <div class="ml-[8px] w-[171px] h-full border border-[#9c9a98] rounded-[2px] flex items-center justify-center border-b-[#a9a9c9]"><div class="w-[7px] h-[7px] border-x border-[#777] bg-[linear-gradient(90deg,#777_1px,transparent_1px,transparent_3px)] bg-[length:3px_7px]"></div></div>
        <svg class="ml-[41px] w-[4px] h-[7px]" viewBox="0 0 4 7"><path d="M0 0v7l4-3.500z" fill="#666"/></svg>
      </div>
    </div>

    <!-- canvas -->
    <div class="relative flex-1 min-w-0">
      <svg class="absolute left-0 top-0 w-[1676px] h-[866px]" viewBox="244 141 1676 866">
        <!-- sheet -->
        <path d="M308 1007V278H1719V1007" fill="none" stroke="#f7941d" stroke-width="2"/>
        <!-- top stub shading -->
        <rect x="753" y="380" width="3" height="38" fill="#f0d8a8"/>
        <rect x="756" y="380" width="18" height="38" fill="#c4b4b4"/>
        <rect x="774" y="380" width="7" height="38" fill="#999592"/>
        <path d="M720 417V379H781V428" fill="none" stroke="#222" stroke-width="1.200"/>
        <!-- flange -->
        <rect x="762" y="418" width="8" height="23" fill="#f0d8a8"/>
        <rect x="770" y="418" width="79" height="23" fill="#c4b4b4"/>
        <rect x="849" y="418" width="31" height="23" fill="#999592"/>
        <rect x="782" y="407" width="87" height="10" fill="#a8a8c0"/>
        <path d="M622 441V418H880" fill="none" stroke="#222" stroke-width="1.300"/>
        <path d="M621 441H881" stroke="#222" stroke-width="1.300"/>
        <!-- cone -->
        <polygon points="622,441 880,441 781,539 720,539" fill="#999592"/>
        <polygon points="703,441 794,441 762,539 738,539" fill="#88807a"/>
        <path d="M622 441 720 539M880 441 781 539" stroke="#444" stroke-width="1"/>
        <!-- shaft -->
        <rect x="753" y="540" width="3" height="467" fill="#f0d8a8"/>
        <rect x="755" y="540" width="19" height="467" fill="#c4b4b4"/>
        <rect x="774" y="540" width="7" height="467" fill="#999592"/>
        <path d="M720 1007V540H781V1007" fill="none" stroke="#333" stroke-width="1.200"/>
        <!-- centre line -->
        <path d="M750.500 248V1007" stroke="#3a3aff" stroke-width="1.200" stroke-dasharray="22 4 4 4"/>
        <circle cx="750.500" cy="248" r="2.200" fill="#1a1ae0"/>
        <!-- sketch rectangle -->
        <rect x="782" y="407" width="87" height="21" fill="none" stroke="#1a1ae0" stroke-width="1.600"/>
        <circle cx="782" cy="407" r="2.500" fill="#1a1ae0"/><circle cx="869" cy="407" r="2.500" fill="#1a1ae0"/><circle cx="782" cy="428" r="2.500" fill="#1a1ae0"/><circle cx="869" cy="428" r="2.500" fill="#1a1ae0"/>
        <!-- relations -->
        <rect x="761" y="412" width="12" height="12" fill="#00c832"/><path d="M767 414v8" stroke="#222"/>
        <rect x="789" y="401" width="12" height="12" fill="#00c832"/><path d="M790 412l4-4M800 402l-4 4M790 402l4 4 3 3" stroke="#222" fill="none"/><circle cx="795" cy="407" r="2" fill="#fff" stroke="#222" stroke-width=".5"/>
        <rect x="819" y="415" width="12" height="12" fill="#00c832"/><path d="M821 421h8" stroke="#222"/>
        <rect x="819" y="436" width="12" height="12" fill="#00c832"/><path d="M821 442h8" stroke="#222"/>
        <rect x="876" y="412" width="12" height="12" fill="#00c832"/><path d="M882 414v8" stroke="#222"/>
        <rect x="759" y="698" width="12" height="12" fill="#00c832"/><path d="M765 700v8" stroke="#222"/>
        <!-- cursor -->
        <path d="M498.500 661.500V675L502 672l2.500 6 3.500-1.500L505.500 671h5z" fill="#fdfaf6" stroke="#222"/>
        <path d="M512.500 677.500 524.500 674V688L512.500 691.500z" fill="#5b9ccb" stroke="#1f5f8f"/><path d="M518.500 673v20" stroke="#222" stroke-dasharray="3 2"/>
        <!-- triad -->
        <path d="M284 949H304" stroke="#d84c3a" stroke-width="3"/><path d="M302 945l8 4-8 4z" fill="#c8352a"/>
        <path d="M284 949V972" stroke="#2a3ad8" stroke-width="3"/><path d="M280 970l4 8 4-8z" fill="#2a3ad8"/>
        <circle cx="284" cy="949" r="4.500" fill="#1f6a1f"/>
        <!-- red origin -->
        <path d="M1586 803V775M1586 803H1600M1582 803h4M1586 803v4" stroke="#e01818" stroke-width="1.200"/>
        <path d="M1586 771l-2.500 7h5zM1603 803l-7-2.500v5z" fill="#e01818"/>
      </svg>

      <div class="absolute left-[65px] top-[139px] text-[#f7941d] font-bold text-[21px] leading-[24px] whitespace-nowrap">上视基准面</div>
      <div class="absolute left-[69px] top-[801px] text-[#e01818] text-[11px] leading-[12px] [font-family:'Liberation_Serif',serif]">X</div>
      <div class="absolute left-[36px] top-[837px] text-[#2a3ad8] text-[11px] leading-[12px] [font-family:'Liberation_Serif',serif]">Z</div>
      <div class="absolute left-[10px] top-[849px] font-bold text-[13px] leading-[16px] text-black whitespace-nowrap">∗上视</div>

      <div class="absolute left-[263px] top-[571px] w-[73px] h-[21px] rounded-[3px] border border-[#777] flex items-center justify-center text-[#777]">上视基准面</div>

      <!-- sidebar handle -->
      <div class="absolute left-0 top-[402px] w-[8px] h-[38px] border-y border-r border-[#9c9a98] flex items-center justify-center"><svg class="w-[6px] h-[6px]" viewBox="0 0 6 6"><path d="M3 .5 5.500 3 3 5.500.5 3z" fill="none" stroke="#888"/></svg></div>

      <!-- right task pane -->
      <div class="absolute right-0 top-[29px] w-[25px] flex flex-col border-l border-t border-b border-[#9c9a98]">
        <div class="h-[24px] pb-[2px] flex items-center justify-center border-b border-[#9c9a98]"><svg class="w-[18px] h-[18px]" viewBox="0 0 18 18"><path d="M1 9 9 1l8 8" fill="none" stroke="#2a78a8" stroke-width="2"/><path d="M3 9v8h12V9" fill="none" stroke="#333"/><path d="M7 17v-5h4v5" fill="none" stroke="#333"/></svg></div>
        <div class="h-[24px] pb-[2px] flex items-center justify-center border-b border-[#9c9a98]"><svg class="w-[14px] h-[18px]" viewBox="0 0 14 18"><path d="M1 4l8-3 4 2v12l-4 2-4-1-4-2z" fill="#fdfaf6" stroke="#444"/><path d="M5 3v13M9 1.500V17" stroke="#444"/></svg></div>
        <div class="h-[24px] pb-[2px] flex items-center justify-center border-b border-[#9c9a98]"><svg class="w-[18px] h-[16px]" viewBox="0 0 18 16"><path d="M1 15V1h5l2 2h7v3" fill="#fdfaf6" stroke="#444"/><path d="M1 15 4 6h13.500L14 15z" fill="#fdfaf6" stroke="#444"/><path d="M1 15 3 8v7z" fill="#999"/></svg></div>
        <div class="h-[24px] pb-[2px] flex items-center justify-center border-b border-[#9c9a98]"><svg class="w-[18px] h-[16px]" viewBox="0 0 18 16"><rect x=".7" y=".7" width="12" height="14.600" fill="#f0c040" stroke="#7a1a1a" stroke-width="1.200"/><path d="M3 4h8M3 9h3v4M9 7v6" stroke="#7a1a1a" stroke-width="1.500" fill="none"/><rect x="14" y="5" width="3.500" height="10" fill="#fdfaf6" stroke="#444"/></svg></div>
        <div class="h-[24px] pb-[2px] flex items-center justify-center border-b border-[#9c9a98]"><svg class="w-[16px] h-[16px]"><use href="#appear"/></svg></div>
        <div class="h-[24px] pb-[2px] flex items-center justify-center border-b border-[#9c9a98]"><svg class="w-[18px] h-[18px]"><use href="#pane"/></svg></div>
        <div class="h-[24px] pb-[2px] flex items-center justify-center"><svg class="w-[18px] h-[16px]" viewBox="0 0 18 16"><path d="M1 1h11v8H6l-3 3V9H1z" fill="#5aa0d2" stroke="#16456e"/><path d="M8 7h9v6h-2v2l-2-2H8z" fill="#fdfaf6" stroke="#444"/></svg></div>
      </div>

      <!-- IME bar -->
      <div class="absolute left-[1438px] top-[826px] h-[26px] flex items-center">
        <div class="w-[25px] h-[25px] -rotate-6 rounded-[2px] bg-[#ef5323] text-white font-bold text-[22px] leading-[25px] text-center z-10 italic">S</div>
        <div class="w-[159px] h-[23px] -ml-[1px] border border-[#a5d8ea] flex items-center bg-[#fdfaf6] text-[#1f78c8]">
          <span class="ml-[7px] w-[15px] font-bold text-[15px] leading-[18px]">中</span>
          <svg class="ml-[8px] w-[14px] h-[14px]" viewBox="0 0 14 14"><path d="M9 1c2 5 0 9-8 9 3 4 12 4 12-3 0-3-2-5-4-6z" fill="#1f78c8"/></svg>
          <span class="ml-[9px] w-[10px] font-bold text-[12px] leading-[14px]">°,</span>
          <svg class="ml-[9px] w-[16px] h-[12px]" viewBox="0 0 16 12"><rect width="16" height="12" rx="1" fill="#1f78c8"/><path d="M2 3h12M2 6h12" stroke="#fff" stroke-dasharray="1.500 1"/><path d="M4 9h8" stroke="#fff" stroke-width="1.500"/></svg>
          <svg class="ml-[7px] w-[14px] h-[15px]" viewBox="0 0 14 15"><circle cx="6" cy="3.500" r="2.800" fill="#9cd0ee"/><path d="M1 8h10v6H3z" fill="#9cd0ee"/><rect x="10" y="9" width="3" height="5" rx="1" fill="#fdfaf6" stroke="#8888cc" stroke-width=".7"/></svg>
          <svg class="ml-[8px] w-[15px] h-[14px]" viewBox="0 0 15 14"><path d="M5 0 0 3l2 3 1-1v9h9V5l1 1 2-3-5-3-2 2z" fill="#1f78c8"/></svg>
          <svg class="ml-[7px] w-[14px] h-[14px]" viewBox="0 0 14 14"><path d="M13 3 10 6 8 4l3-3C8 0 5 2 6 5.500L0 11.500 2.500 14l6-6C12 9 14 6 13 3z" fill="#1f78c8"/></svg>
        </div>
      </div>
    </div>
  </div>

  <!-- bottom tabs -->
  <div class="h-[16px] shrink-0 flex border-t border-b border-[#9c9a98] z-10">
    <div class="ml-[1px] w-[66px] bg-[#989492] border-t border-black"></div>
    <div class="w-[47px] border-r border-[#9c9a98] flex items-center justify-center pl-[3px]">模型</div>
    <div class="w-[56px] border-r border-[#9c9a98] flex items-center justify-center whitespace-nowrap">3D 视图</div>
    <div class="w-[80px] border-r border-[#9c9a98] flex items-center justify-center whitespace-nowrap pr-[8px]">运动算例1</div>
  </div>

  <!-- status bar -->
  <div class="h-[18px] shrink-0 flex items-center whitespace-nowrap pt-[3px]">
    <span class="ml-[1px] w-[260px] text-[12.5px] leading-[15px]">SOLIDWORKS Premium 2018 SP5.0</span>
    <span class="ml-[1125px] w-[97px] text-[12.5px] text-[#222]">-142.83mm</span>
    <span class="w-[61px] text-[12.5px]">18.65mm</span>
    <span class="w-[48px] overflow-hidden">0.00mm</span>
    <span class="w-[54px]">欠定义</span>
    <span class="w-[130px]">在编辑 草图12</span>
    <span class="w-[55px]">自定义</span>
    <svg class="w-[6px] h-[4px] rotate-180"><use href="#drop"/></svg>
    <svg class="ml-[68px] w-[15px] h-[15px]" viewBox="0 0 15 15"><path d="M1 6 9 1l5 4v4l-7 5-6-4z" fill="#fdfaf6" stroke="#555"/><path d="M1 6l6 4 7-5M7 10v4M4 5l5 3M7 3.500l5 3" fill="none" stroke="#555"/></svg>
  </div>
</div>
</body>
</html>
